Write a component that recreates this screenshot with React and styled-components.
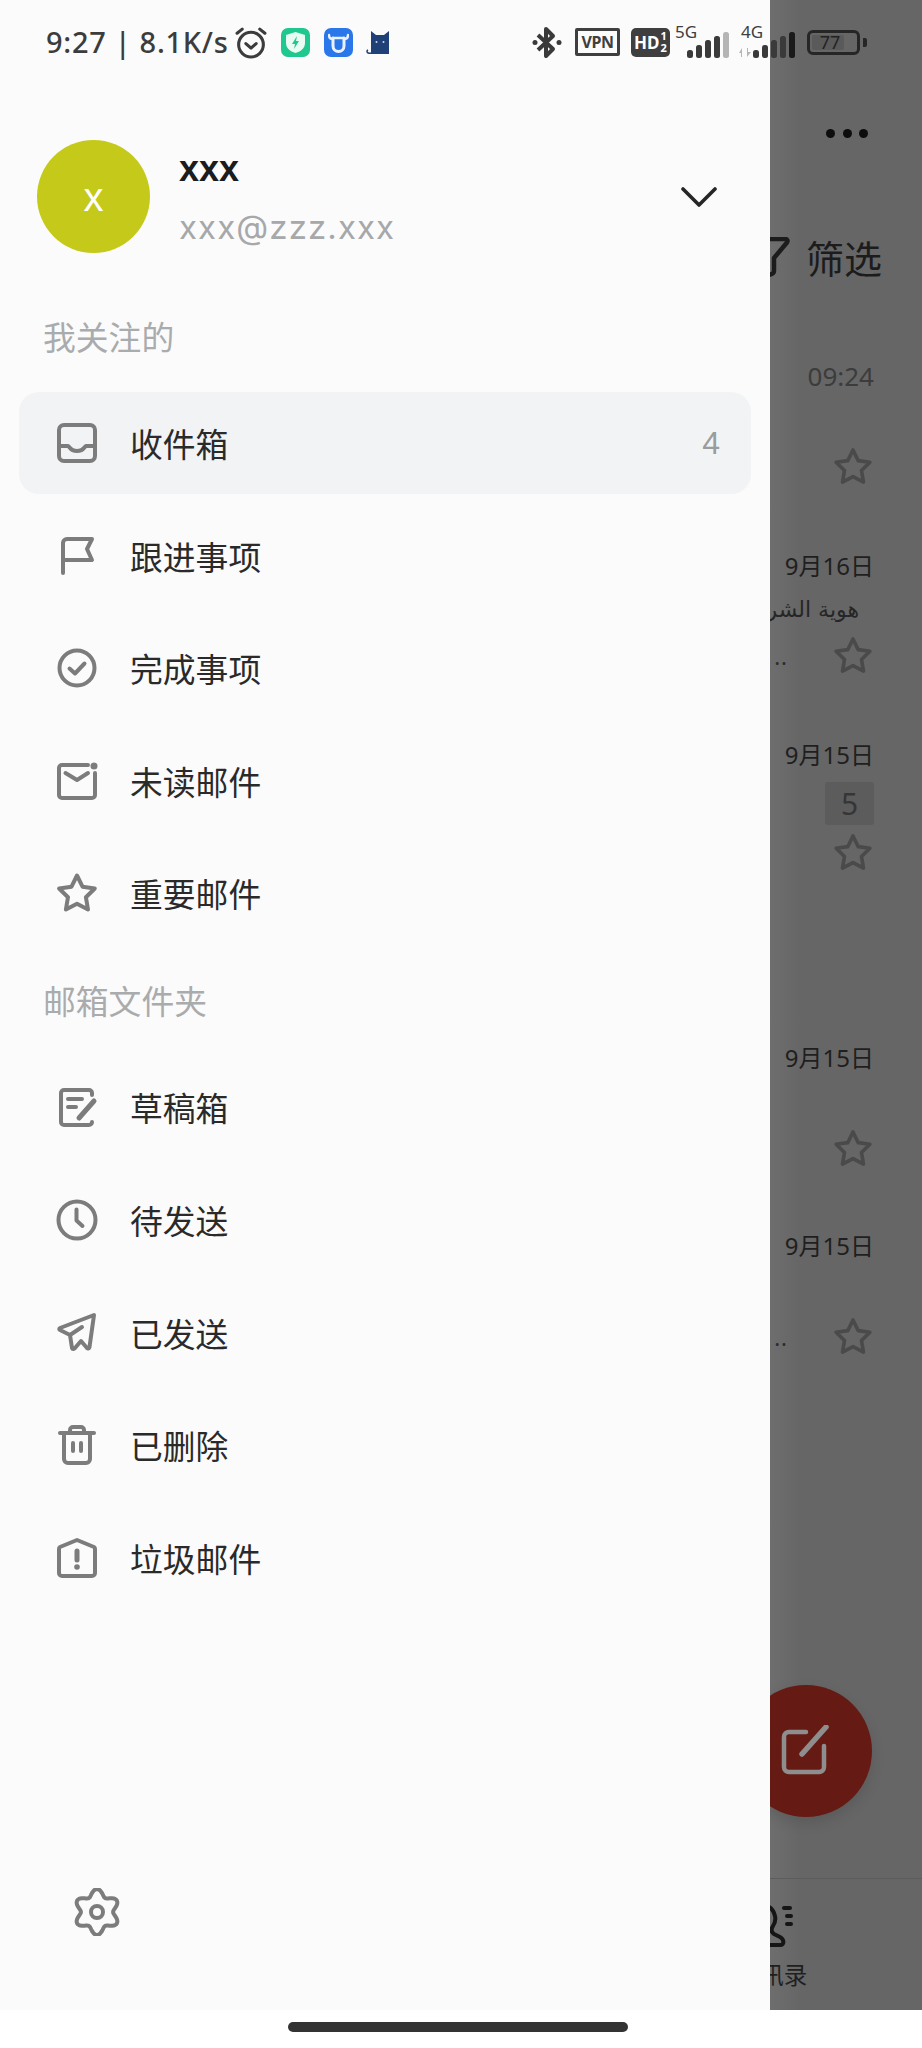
import React from 'react';
import styled, { createGlobalStyle } from 'styled-components';

const GlobalStyle = createGlobalStyle`
  html, body {
    margin: 0;
    padding: 0;
    background: #fff;
  }
  * {
    box-sizing: border-box;
  }
  body {
    font-family: "Noto Sans CJK SC", "Noto Sans", sans-serif;
  }
`;

const Screen = styled.div`
  position: relative;
  width: 922px;
  height: 2048px;
  overflow: hidden;
  background: #fff;
`;

const Main = styled.div`
  display: flex;
  height: 2010px;
`;

/* status bar lies over both the drawer and the dimmed page */
const StatusBar = styled.div`
  position: absolute;
  top: 0;
  left: 0;
  right: 0;
  z-index: 3;
  height: 84px;
  display: flex;
  align-items: center;
  padding: 0 55px 0 46px;
`;

const Clock = styled.span`
  font-family: "Noto Sans", "Liberation Sans", sans-serif;
  font-weight: 500;
  font-size: 29px;
  line-height: 34px;
  color: #3c3c3c;
  letter-spacing: 0.7px;
  white-space: nowrap;
`;

const StatusLeft = styled.div`
  display: flex;
  align-items: center;
`;

const StatusRight = styled.div`
  display: flex;
  align-items: center;
  margin-left: auto;
`;

const AppTile = styled.div`
  width: 29px;
  height: 29px;
  margin-left: ${(p) => p.$gap}px;
  border-radius: 7px;
  background: ${(p) => p.$bg};
  display: flex;
  align-items: center;
  justify-content: center;
`;

const StatusIcon = styled.svg`
  display: block;
  flex: none;
  margin-left: ${(p) => p.$gap || 0}px;
`;

const VpnBadge = styled.div`
  width: 45px;
  height: 28px;
  margin-left: 13px;
  border: 3px solid #3f3f3f;
  border-radius: 2px;
  font-family: "Noto Sans", sans-serif;
  font-weight: 700;
  font-size: 16px;
  line-height: 22px;
  letter-spacing: -0.5px;
  text-align: center;
  color: #3f3f3f;
`;

const HdBadge = styled.div`
  width: 39px;
  height: 29px;
  margin-left: 11px;
  border-radius: 5px;
  background: #3f3f3f;
  color: #fff;
  font-family: "Noto Sans", sans-serif;
  font-weight: 700;
  display: flex;
  align-items: center;
  padding-left: 3px;
  font-size: 17px;
`;

const HdFraction = styled.span`
  display: flex;
  flex-direction: column;
  font-size: 11px;
  line-height: 12px;
  margin-left: 1px;
`;

const Signal = styled.div`
  position: relative;
  width: ${(p) => p.$width}px;
  height: 32px;
  margin-left: ${(p) => p.$gap}px;
`;

const NetLabel = styled.span`
  position: absolute;
  top: -4px;
  left: ${(p) => p.$left}px;
  font-family: "Noto Sans", sans-serif;
  font-size: 17px;
  line-height: 20px;
  color: #3f3f3f;
`;

const Bars = styled.svg`
  position: absolute;
  left: ${(p) => p.$left}px;
  bottom: 0;
`;

const DataArrows = styled.svg`
  position: absolute;
  left: 0;
  bottom: 1px;
`;

const Battery = styled.div`
  position: relative;
  width: 53px;
  height: 25px;
  margin-left: 12px;
  border: 3px solid #262626;
  border-radius: 6px;
  padding: 2px;
`;

const BatteryFill = styled.div`
  width: 75%;
  height: 100%;
  border-radius: 2px;
  background: #5a5a5a;
  color: #222;
  font-family: "Noto Sans", sans-serif;
  font-size: 18px;
  line-height: 15px;
  text-align: center;
  padding-left: 4px;
`;

const BatteryTip = styled.div`
  width: 4px;
  height: 9px;
  margin-left: 3px;
  border-radius: 0 2px 2px 0;
  background: #262626;
`;

const Drawer = styled.aside`
  position: relative;
  z-index: 2;
  flex: none;
  width: 770px;
  height: 100%;
  padding-top: 140px;
  background: #fbfbfb;
  display: flex;
  flex-direction: column;
`;

const Profile = styled.div`
  display: flex;
  align-items: center;
  padding: 0 53px 0 37px;
`;

const Avatar = styled.div`
  width: 113px;
  height: 113px;
  flex: none;
  border-radius: 50%;
  background: #c4c91a;
  color: #fff;
  font-family: "Liberation Sans", sans-serif;
  font-size: 40px;
  line-height: 115px;
  text-align: center;
`;

const ProfileInfo = styled.div`
  margin-left: 29px;
`;

const Name = styled.div`
  font-family: "Liberation Sans", sans-serif;
  font-weight: 700;
  font-size: 36px;
  line-height: 44px;
  padding-top: 2px;
  color: #1c1c1c;
`;

const Email = styled.div`
  margin-top: 14px;
  font-family: "Inter", "Liberation Sans", sans-serif;
  font-size: 33px;
  line-height: 44px;
  letter-spacing: 1.1px;
  color: #a6a8aa;
`;

const Chevron = styled.svg`
  display: block;
  margin-left: auto;
`;

const SectionLabel = styled.div`
  margin-top: ${(p) => p.$top}px;
  padding-left: 43px;
  font-size: 32.8px;
  line-height: 40px;
  color: #a9abad;
`;

const NavList = styled.nav`
  display: flex;
  flex-direction: column;
  gap: 10.6px;
  margin-top: ${(p) => p.$top}px;
  padding: 0 19px;
`;

const NavRow = styled.div`
  height: 102px;
  display: flex;
  align-items: center;
  padding: 0 31px 0 37px;
  border-radius: 20px;
  background: ${(p) => (p.$active ? '#f2f3f5' : 'transparent')};
`;

const NavIcon = styled.svg`
  display: block;
  flex: none;
  width: ${(p) => p.$size || 42}px;
  height: ${(p) => p.$size || 42}px;
  fill: none;
  stroke: #7c7c7c;
  stroke-width: 4;
  stroke-linecap: round;
  stroke-linejoin: round;
`;

const NavText = styled.span`
  margin-left: 32px;
  font-size: 32.8px;
  line-height: 44px;
  color: #2a2a2a;
`;

const Count = styled.span`
  margin-left: auto;
  font-family: "Liberation Sans", sans-serif;
  font-size: 32px;
  color: #9a9c9e;
`;

const Settings = styled.div`
  margin-top: auto;
  padding: 0 0 74px 73px;
`;

const Peek = styled.section`
  position: relative;
  flex: 1;
  min-width: 0;
  height: 100%;
  overflow: hidden;
  padding-top: 129px;
  display: flex;
  flex-direction: column;
  background: linear-gradient(to right, #6e6e6e, #666 30px);
`;

const MoreDots = styled.div`
  display: flex;
  justify-content: flex-end;
  gap: 7.5px;
  padding-right: 54px;
`;

const Dot = styled.span`
  width: 9px;
  height: 9px;
  border-radius: 50%;
  background: #0d0d0d;
`;

const FilterRow = styled.div`
  display: flex;
  align-items: center;
  justify-content: flex-end;
  gap: 16px;
  height: 56px;
  margin-top: 91px;
  padding-right: 40px;
  font-size: 38px;
  line-height: 56px;
  color: #1c1c1c;
  white-space: nowrap;
`;

const FilterIcon = styled.svg`
  display: block;
  flex: none;
`;

const MailDate = styled.div`
  height: 30px;
  margin-top: ${(p) => p.$top}px;
  padding-right: 48px;
  text-align: right;
  font-family: "Noto Sans", "Noto Sans CJK SC", sans-serif;
  font-size: ${(p) => p.$size || 24}px;
  line-height: 30px;
  color: ${(p) => p.$color || '#1f1f1f'};
  white-space: nowrap;
`;

const Preview = styled.div`
  height: 30px;
  margin-top: 14px;
  font-family: "DejaVu Sans", sans-serif;
  font-size: 22px;
  line-height: 30px;
  color: #262626;
  white-space: nowrap;
  overflow: hidden;
  direction: rtl;
  & > span {
    display: inline-block;
    margin-right: 63px;
  }
`;

const Unread = styled.div`
  width: 49px;
  height: 43px;
  margin: 12px 48px 0 auto;
  border-radius: 3px;
  background: #5c5c5c;
  color: #363636;
  font-family: "Noto Sans", sans-serif;
  font-size: 30px;
  line-height: 43px;
  text-align: center;
`;

const StarRow = styled.div`
  display: flex;
  align-items: center;
  justify-content: flex-end;
  gap: 44px;
  height: 42px;
  margin-top: ${(p) => p.$top}px;
  padding-right: 48px;
`;

const Ellipsis = styled.span`
  font-family: "Noto Sans", sans-serif;
  font-size: 22px;
  line-height: 22px;
  letter-spacing: 1px;
  color: #2c2c2c;
`;

const Star = styled.svg`
  display: block;
  width: 42px;
  height: 42px;
  fill: none;
  stroke: #4a4a4a;
  stroke-width: 3.6;
  stroke-linejoin: round;
`;

const Fab = styled.div`
  position: absolute;
  left: -30px;
  top: 1685px;
  width: 132px;
  height: 132px;
  border-radius: 50%;
  background: #651b14;
  box-shadow: 0 6px 14px rgba(0, 0, 0, 0.12);
  display: flex;
  align-items: center;
  justify-content: center;
`;

const BottomNav = styled.div`
  height: 132px;
  margin-top: auto;
  margin-left: -50px;
  border-top: 1px solid #5c5c5c;
  padding-top: 22px;
`;

const Tab = styled.div`
  width: 104px;
  display: flex;
  flex-direction: column;
  align-items: center;
  gap: 12px;
  font-size: 23.5px;
  line-height: 30px;
  color: #1f1f1f;
`;

const HomeArea = styled.div`
  height: 38px;
  padding: 12px 6px 0 0;
  display: flex;
  justify-content: center;
`;

const HomeBar = styled.div`
  width: 340px;
  height: 10px;
  border-radius: 5px;
  background: #333;
`;

const STAR_PATH =
  'M21 4l5.2 10.6 11.7 1.7-8.4 8.2 2 11.6L21 30.6 10.5 36.1l2-11.6-8.4-8.2 11.7-1.7z';

// wavy gear outline, six teeth with one pointing up
const gearPath = () => {
  const points = [];
  for (let i = 0; i < 120; i += 1) {
    const a = (i / 120) * Math.PI * 2;
    const r = 19.5 + 3.4 * Math.cos(6 * a);
    points.push(`${(24 + r * Math.sin(a)).toFixed(2)} ${(24 - r * Math.cos(a)).toFixed(2)}`);
  }
  return `M${points.join('L')}Z`;
};

const icons = {
  inbox: (
    <>
      <rect x="3" y="3" width="36" height="36" rx="5" />
      <path d="M3 24h9c1.5 0 2 5 9 5s7.500-5 9-5h9" />
    </>
  ),
  flag: <path d="M7 38V8a4 4 0 0 1 4-4h25l-5 10 5 11H7" />,
  check: (
    <>
      <circle cx="21" cy="21" r="17.500" />
      <path d="M13.500 21.500l5.500 5 9.500-10" />
    </>
  ),
  unread: (
    <>
      <path d="M32 5H6a3 3 0 0 0-3 3v27a3 3 0 0 0 3 3h30a3 3 0 0 0 3-3V13" />
      <path d="M9.500 13l11.500 7 11-7" />
      <circle cx="38" cy="6" r="3.500" fill="#7c7c7c" stroke="none" />
    </>
  ),
  star: <path d="M21 3.500l5.500 11.200 12.300 1.800-8.900 8.700 2.100 12.300L21 31.700 9.900 37.500 12 25.200 3.100 16.500l12.400-1.800z" />,
  draft: (
    <>
      <path d="M36 9V7a3 3 0 0 0-3-3H8a3 3 0 0 0-3 3v29a3 3 0 0 0 3 3h25a3 3 0 0 0 3-3" />
      <path d="M12 13h14M12 21h8" />
      <path d="M23 32l15-17" strokeWidth="5" />
    </>
  ),
  clock: (
    <>
      <circle cx="21" cy="21" r="18.500" />
      <path d="M20.500 10.500v11l6 5.500" />
    </>
  ),
  sent: (
    <>
      <path d="M38 3L4 16c-1 .5-1 1.500 0 2l10 5 2 13c.5 1.500 2 1 3 0l6-7 6 7c1 1 2 .5 2.500-1z" />
      <path d="M14 23l12-8" />
    </>
  ),
  trash: (
    <>
      <path d="M4 9h34" />
      <path d="M14 8V6a3 3 0 0 1 3-3h8a3 3 0 0 1 3 3v2" />
      <path d="M8 10v25a4 4 0 0 0 4 4h18a4 4 0 0 0 4-4V10" />
      <path d="M17 19v8M25 19v8" />
    </>
  ),
  spam: (
    <>
      <path d="M21 3L4 10a2 2 0 0 0-1 2v24a3 3 0 0 0 3 3h30a3 3 0 0 0 3-3V12a2 2 0 0 0-1-2z" />
      <path d="M21 14v9" strokeWidth="5" />
      <circle cx="21" cy="30" r="2.800" fill="#7c7c7c" stroke="none" />
    </>
  ),
};

const followed = [
  { icon: 'inbox', label: '收件箱', count: 4, active: true },
  { icon: 'flag', label: '跟进事项' },
  { icon: 'check', label: '完成事项' },
  { icon: 'unread', label: '未读邮件' },
  { icon: 'star', label: '重要邮件' },
];

const folders = [
  { icon: 'draft', label: '草稿箱' },
  { icon: 'clock', label: '待发送' },
  { icon: 'sent', label: '已发送' },
  { icon: 'trash', label: '已删除' },
  { icon: 'spam', label: '垃圾邮件' },
];

const Item = ({ item }) => (
  <NavRow $active={item.active}>
    <NavIcon viewBox="0 0 42 42">{icons[item.icon]}</NavIcon>
    <NavText>{item.label}</NavText>
    {item.count && <Count>{item.count}</Count>}
  </NavRow>
);

const MailStar = ({ top, dots }) => (
  <StarRow $top={top}>
    {dots && <Ellipsis>..</Ellipsis>}
    <Star viewBox="0 0 42 42">
      <path d={STAR_PATH} />
    </Star>
  </StarRow>
);

const SignalBars = ({ left, faded }) => (
  <Bars $left={left} width="42" height="26" viewBox="0 0 42 26">
    <rect x="0" y="18" width="6" height="8" rx="2.500" fill="#3a3a3a" />
    <rect x="9" y="13" width="6" height="13" rx="2.500" fill="#3a3a3a" />
    <rect x="18" y="8" width="6" height="18" rx="2.500" fill="#3a3a3a" />
    <rect x="27" y="4" width="6" height="22" rx="2.500" fill="#3a3a3a" />
    <rect x="36" y="0" width="6" height="26" rx="2.500" fill={faded ? '#b5b5b5' : '#1a1a1a'} />
  </Bars>
);

const App = () => (
  <Screen>
    <GlobalStyle />
    <StatusBar>
      <StatusLeft>
        <Clock>9:27 | 8.1K/s</Clock>
        <StatusIcon $gap={6} width="34" height="33" viewBox="0 0 33 32" fill="none" stroke="#3c3c3c" strokeWidth="3" strokeLinecap="round" strokeLinejoin="round">
          <circle cx="16.500" cy="18" r="12" />
          <path d="M11.500 17l5 4.500 5-4.500M3 7l5-4M30 7l-5-4" />
        </StatusIcon>
        <AppTile $gap={13} $bg="#1fc88e">
          <svg width="19" height="21" viewBox="0 0 19 21">
            <path d="M9.500 0L19 3v8c0 5-4 8.500-9.500 10C4 19.500 0 16 0 11V3z" fill="#e9fbf3" />
            <path d="M11 4L6 12h3l-1 5 5-8h-3z" fill="#1fc88e" />
          </svg>
        </AppTile>
        <AppTile $gap={14} $bg="#2a77ea">
          <svg width="21" height="21" viewBox="0 0 21 21" fill="none" stroke="#eaf2ff" strokeWidth="3" strokeLinecap="round">
            <path d="M5 6v8a5 5 0 0 0 11 0V6" />
            <path d="M1 3c0 3 2 4 4 4M20 3c0 3-2 4-4 4M5 6h11" strokeWidth="2.500" />
          </svg>
        </AppTile>
        <StatusIcon $gap={13} width="27" height="28" viewBox="0 0 27 28">
          <path d="M5 3l5 4h8l5-4v23H5z" fill="#1f4178" />
          <path d="M5 25c-4 1-5-2-3-3" fill="none" stroke="#1f4178" strokeWidth="1.500" />
          <circle cx="10.500" cy="14" r="1" fill="#cfd8e6" />
          <circle cx="17.500" cy="14" r="1" fill="#cfd8e6" />
        </StatusIcon>
      </StatusLeft>
      <StatusRight>
        <StatusIcon width="30" height="33" viewBox="0 0 30 33" fill="none" stroke="#3a3a3a" strokeWidth="4" strokeLinejoin="round">
          <path d="M6 9l15 14-7 7V3l7 7L6 24" />
          <circle cx="3" cy="16.500" r="2.500" fill="#3a3a3a" stroke="none" />
          <circle cx="27" cy="16.500" r="2.500" fill="#3a3a3a" stroke="none" />
        </StatusIcon>
        <VpnBadge>VPN</VpnBadge>
        <HdBadge>
          HD
          <HdFraction>
            <span>1</span>
            <span>2</span>
          </HdFraction>
        </HdBadge>
        <Signal $width={53} $gap={5}>
          <NetLabel $left={0}>5G</NetLabel>
          <SignalBars left={12} faded />
        </Signal>
        <Signal $width={56} $gap={11}>
          <NetLabel $left={2}>4G</NetLabel>
          <DataArrows width="14" height="9" viewBox="0 0 14 9" fill="#b5b5b5">
            <path d="M0 5l3-5v9H2V5zM8 0h1v4l3 0-4 5z" />
          </DataArrows>
          <SignalBars left={14} />
        </Signal>
        <Battery>
          <BatteryFill>77</BatteryFill>
        </Battery>
        <BatteryTip />
      </StatusRight>
    </StatusBar>
    <Main>
      <Drawer>
        <Profile>
          <Avatar>x</Avatar>
          <ProfileInfo>
            <Name>xxx</Name>
            <Email>xxx@zzz.xxx</Email>
          </ProfileInfo>
          <Chevron width="36" height="20" viewBox="0 0 36 20" fill="none" stroke="#262626" strokeWidth="3.600" strokeLinecap="round" strokeLinejoin="round">
            <path d="M2 2l16 16L34 2" />
          </Chevron>
        </Profile>
        <SectionLabel $top={63}>我关注的</SectionLabel>
        <NavList $top={36}>
          {followed.map((item) => (
            <Item key={item.label} item={item} />
          ))}
        </NavList>
        <SectionLabel $top={36}>邮箱文件夹</SectionLabel>
        <NavList $top={36}>
          {folders.map((item) => (
            <Item key={item.label} item={item} />
          ))}
        </NavList>
        <Settings>
          <NavIcon $size={48} viewBox="0 0 48 48">
            <path d={gearPath()} />
            <circle cx="24" cy="24" r="6" />
          </NavIcon>
        </Settings>
      </Drawer>
      <Peek>
        <MoreDots>
          <Dot />
          <Dot />
          <Dot />
        </MoreDots>
        <FilterRow>
          <FilterIcon width="52" height="40" viewBox="0 0 52 40" fill="none" stroke="#1c1c1c" strokeWidth="4.500" strokeLinecap="round" strokeLinejoin="round">
            <path d="M0 2h47c2.500 0 3 2 2 3.500L36 21v13c0 2-2 3.500-6 4" />
          </FilterIcon>
          筛选
        </FilterRow>
        <MailDate $top={76} $size={26} $color="#3c3c3c">09:24</MailDate>
        <MailStar top={55} />
        <MailDate $top={63}>9月16日</MailDate>
        <Preview>
          <span>هوية الشركة</span>
        </Preview>
        <MailStar top={10} dots />
        <MailDate $top={63}>9月15日</MailDate>
        <Unread>5</Unread>
        <MailStar top={7} />
        <MailDate $top={169}>9月15日</MailDate>
        <MailStar top={55} />
        <MailDate $top={61}>9月15日</MailDate>
        <MailStar top={55} dots />
        <Fab>
          <svg width="52" height="52" viewBox="0 0 52 52" fill="none" stroke="#8e8e8e" strokeWidth="4.500" strokeLinecap="round" strokeLinejoin="round">
            <path d="M26 7H9a5 5 0 0 0-5 5v30a5 5 0 0 0 5 5h30a5 5 0 0 0 5-5V21" />
            <path d="M22 29L46 2" strokeWidth="5.500" />
          </svg>
        </Fab>
        <BottomNav>
          <Tab>
            <svg width="52" height="46" viewBox="0 0 52 46" fill="none" stroke="#151515" strokeWidth="4" strokeLinecap="round" strokeLinejoin="round">
              <path d="M4 44h30c5 0 4-6 0-8l-6-3c-3-2-3-5-1-8 2-3 3-6 2-10C27 7 21 3 15 5" />
              <path d="M38 7h6M41 15h4M41 23h4" />
            </svg>
            <span>通讯录</span>
          </Tab>
        </BottomNav>
      </Peek>
    </Main>
    <HomeArea>
      <HomeBar />
    </HomeArea>
  </Screen>
);

export default App;
